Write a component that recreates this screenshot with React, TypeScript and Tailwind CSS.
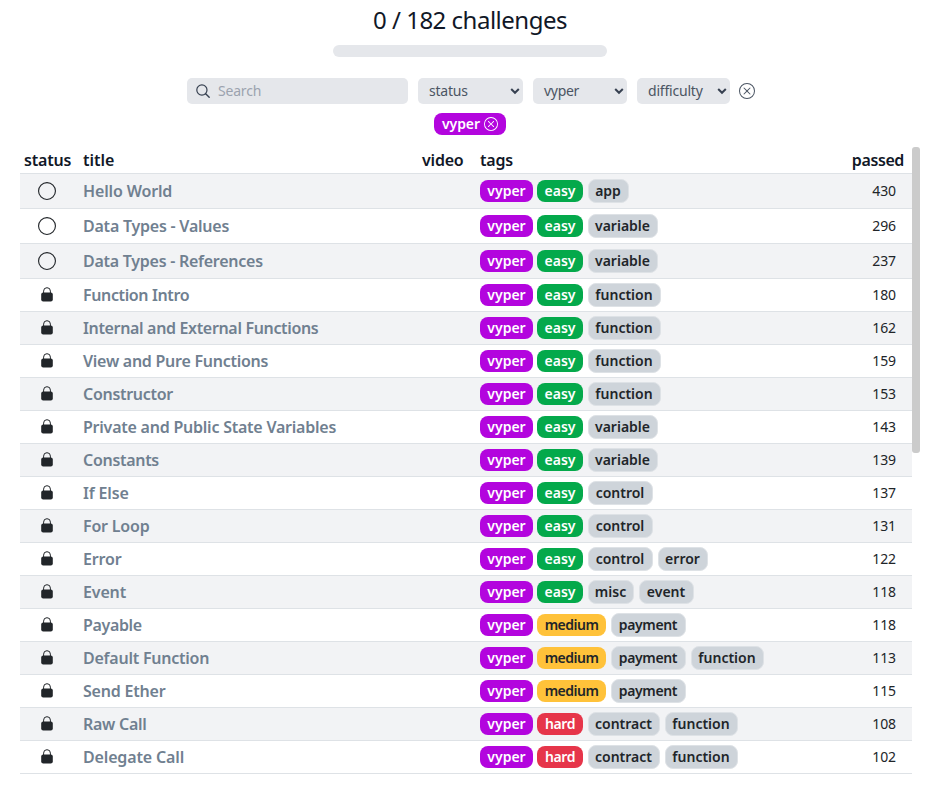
import type { ReactNode } from "react";
import { BsXCircle, BsCircle } from "react-icons/bs";

type Challenge = { title: string; spacing: string; tags: string[]; passed: number; open?: boolean };

const challenges: Challenge[] = [
  { title: "Hello World", spacing: "tracking-[-0.15px]", tags: ["vyper", "easy", "app"], passed: 430, open: true },
  { title: "Data Types - Values", spacing: "tracking-[-0.23px]", tags: ["vyper", "easy", "variable"], passed: 296, open: true },
  { title: "Data Types - References", spacing: "tracking-[-0.26px]", tags: ["vyper", "easy", "variable"], passed: 237, open: true },
  { title: "Function Intro", spacing: "tracking-[-0.38px]", tags: ["vyper", "easy", "function"], passed: 180 },
  { title: "Internal and External Functions", spacing: "tracking-[-0.34px]", tags: ["vyper", "easy", "function"], passed: 162 },
  { title: "View and Pure Functions", spacing: "tracking-[-0.26px]", tags: ["vyper", "easy", "function"], passed: 159 },
  { title: "Constructor", spacing: "tracking-[-0.3px]", tags: ["vyper", "easy", "function"], passed: 153 },
  { title: "Private and Public State Variables", spacing: "tracking-[-0.23px]", tags: ["vyper", "easy", "variable"], passed: 143 },
  { title: "Constants", spacing: "tracking-[-0.3px]", tags: ["vyper", "easy", "variable"], passed: 139 },
  { title: "If Else", spacing: "tracking-[-0.15px]", tags: ["vyper", "easy", "control"], passed: 137 },
  { title: "For Loop", spacing: "tracking-[-0.2px]", tags: ["vyper", "easy", "control"], passed: 131 },
  { title: "Error", spacing: "tracking-[-0.15px]", tags: ["vyper", "easy", "control", "error"], passed: 122 },
  { title: "Event", spacing: "tracking-[-0.15px]", tags: ["vyper", "easy", "misc", "event"], passed: 118 },
  { title: "Payable", spacing: "tracking-[-0.35px]", tags: ["vyper", "medium", "payment"], passed: 118 },
  { title: "Default Function", spacing: "tracking-[-0.23px]", tags: ["vyper", "medium", "payment", "function"], passed: 113 },
  { title: "Send Ether", spacing: "tracking-[-0.2px]", tags: ["vyper", "medium", "payment"], passed: 115 },
  { title: "Raw Call", spacing: "tracking-[-0.27px]", tags: ["vyper", "hard", "contract", "function"], passed: 108 },
  { title: "Delegate Call", spacing: "tracking-[-0.15px]", tags: ["vyper", "hard", "contract", "function"], passed: 102 },
];

const accents: Record<string, string> = {
  vyper: "w-[53px] bg-[#b305de] text-white",
  easy: "w-[46px] bg-[#04a94b] text-white",
  medium: "w-[69px] bg-[#ffc23a] text-[#212529] tracking-[-0.5px]",
  hard: "w-[46px] bg-[#e6354a] text-white tracking-[-0.4px]",
};

const topicWidths: Record<string, string> = {
  app: "w-[41px]",
  variable: "w-[70px]",
  function: "w-[73px]",
  control: "w-[65px]",
  error: "w-[50px]",
  misc: "w-[46px]",
  event: "w-[55px]",
  payment: "w-[75px] tracking-[-0.35px]",
  contract: "w-[72px]",
};

function Tag({ name }: { name: string }) {
  const accent = accents[name];
  const look = accent
    ? `h-[22px] mr-1 ${accent}`
    : `h-6 ml-[0.5px] mr-[4.5px] border border-[#dee2e6] bg-[#ced4da] text-[#212529] ${topicWidths[name]}`;
  return (
    <span className={`flex shrink-0 items-center justify-center rounded-lg text-[14px] leading-none font-semibold whitespace-nowrap ${look}`}>
      <span className="pb-px">{name}</span>
    </span>
  );
}

function Lock() {
  return (
    <svg width="12" height="15" viewBox="0 0 12 15" className="mb-px text-[#212529]">
      <path d="M2.6 6V4.1a3.4 3.4 0 0 1 6.8 0V6" fill="none" stroke="currentColor" strokeWidth="1" />
      <rect x="0.2" y="5.6" width="11.6" height="8.8" rx="2" fill="currentColor" />
    </svg>
  );
}

function SearchIcon() {
  return (
    <svg width="15" height="15" viewBox="0 0 15 15" fill="none" stroke="#374151" strokeLinecap="round">
      <circle cx="5.9" cy="6" r="5.1" strokeWidth="1.2" />
      <path d="M9.7 9.8l3.5 3.5" strokeWidth="1.4" />
    </svg>
  );
}

function Select({ className, children }: { className: string; children: ReactNode }) {
  return (
    <button className={`flex h-[26px] items-center justify-between rounded-[5px] bg-[#e5e7eb] pr-[3px] pl-[11px] text-[14px] leading-none text-[#4b5563] ${className}`}>
      <span className="pb-px">{children}</span>
      <svg width="10" height="8" viewBox="0 0 10 8" fill="none">
        <path d="M1.2 2l3.8 3.8L8.8 2" stroke="#374151" strokeWidth="2" />
      </svg>
    </button>
  );
}

export default function App() {
  return (
    <div className="h-[801px] w-[944px] overflow-hidden bg-white font-['Noto_Sans',sans-serif] text-[#111827]">
      <header className="flex w-[940px] flex-col items-center">
        <h1 className="mt-1 h-8 text-[24px] leading-8 whitespace-nowrap tracking-[-0.5px]">0 / 182 challenges</h1>
        <div className="mt-[9px] h-3 w-[274px] rounded-full bg-[#e5e7eb]" />
      </header>

      <div className="mt-[21px] ml-[187px] flex h-[26px] items-center">
        <label className="flex h-[26px] w-[221px] items-center rounded-[5px] bg-[#e5e7eb] pl-[9px]">
          <SearchIcon />
          <span className="ml-[7px] pb-px text-[14px] leading-none tracking-[-0.2px] text-[#9ca3af]">Search</span>
        </label>
        <Select className="ml-[10px] w-[105px] tracking-[-0.2px]">status</Select>
        <Select className="ml-[10px] w-[94px] tracking-[-0.3px]">vyper</Select>
        <Select className="ml-[10px] w-[93px] tracking-[-0.2px]">difficulty</Select>
        <BsXCircle className="ml-[9px] h-4 w-4 text-[#4b5563]" />
      </div>

      <div className="mt-[9px] flex w-[940px] justify-center">
        <span className="flex h-[22px] w-[72px] items-center justify-center rounded-lg bg-[#b305de] text-[14px] leading-none font-semibold text-white">
          <span className="pb-px tracking-[-0.1px]">vyper</span>
          <BsXCircle className="ml-1 h-[14px] w-[14px]" />
        </span>
      </div>

      <div className="mt-3 ml-5 flex items-start">
        <section className="w-[892px]">
          <div className="flex h-[27px] items-center border-b border-[#dee2e6] text-[16px] leading-none font-semibold tracking-[-0.2px] text-[#111827]">
            <span className="w-[63px] pl-1">status</span>
            <span className="w-[339px] tracking-normal">title</span>
            <span className="w-[58px]">video</span>
            <span className="flex-1">tags</span>
            <span className="pr-2 tracking-[-0.4px]">passed</span>
          </div>
          {challenges.map((c, i) => (
            <div
              key={c.title}
              className={`flex items-center border-b border-[#dee2e6] ${c.open ? "h-[35px]" : "h-[33px]"} ${i % 2 ? "bg-white" : "bg-[#f2f3f5]"}`}
            >
              <span className="flex w-[54px] justify-center">
                {c.open ? <BsCircle className="h-[18px] w-[18px] text-[#212529]" /> : <Lock />}
              </span>
              <span className={`w-[406px] pb-px pl-[9px] text-[16px] leading-none font-semibold whitespace-nowrap text-[#708090] ${c.spacing}`}>{c.title}</span>
              <span className="flex flex-1 items-center">
                {c.tags.map((t) => (
                  <Tag key={t} name={t} />
                ))}
              </span>
              <span className="pr-4 text-[14px] leading-none tracking-[-0.1px] text-[#212529]">{c.passed}</span>
            </div>
          ))}
        </section>
        <div className="h-[306px] w-2 rounded-[3px] bg-[#cbcbcb]" />
      </div>
    </div>
  );
}
